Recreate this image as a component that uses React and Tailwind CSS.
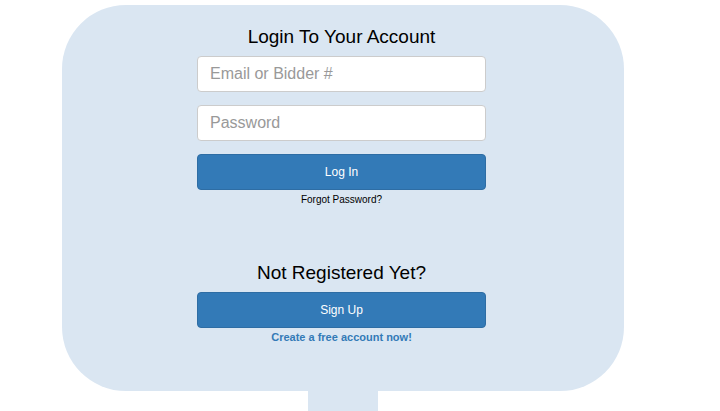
export default function App() {
  return (
    <div className="w-[720px] h-[411px] bg-white overflow-hidden font-['Liberation_Sans',Arial,sans-serif]">
      <div className="pt-[5px] pl-[62px]">
        <div className="w-[562px] h-[386px] rounded-[64px] bg-[#dae6f2] flex flex-col items-start pl-[135px] pt-[20px]">
          <div className="w-[289px] flex flex-col">
            <h2 className="text-center text-[19px] leading-[24px] text-black">Login To Your Account</h2>
            <input
              type="text"
              placeholder="Email or Bidder #"
              className="h-[36px] w-full mt-[7px] rounded-[4px] border border-[#ccc] bg-white px-[12px] text-[16px] placeholder-[#999] outline-none"
            />
            <input
              type="password"
              placeholder="Password"
              className="h-[36px] w-full mt-[13px] rounded-[4px] border border-[#ccc] bg-white px-[12px] text-[16px] placeholder-[#999] outline-none"
            />
            <button className="h-[36px] w-full mt-[13px] rounded-[4px] border border-[#2e6da4] bg-[#337ab7] text-white text-[12px]">
              Log In
            </button>
            <p className="text-center text-[10px] leading-[12px] mt-[4px] text-black">Forgot Password?</p>
            <h2 className="text-center text-[19px] leading-[24px] text-black mt-[55px]">Not Registered Yet?</h2>
            <button className="h-[36px] w-full mt-[7px] rounded-[4px] border border-[#2e6da4] bg-[#337ab7] text-white text-[12px]">
              Sign Up
            </button>
            <a className="text-center text-[11px] leading-[14px] mt-[2px] font-bold text-[#337ab7]">Create a free account now!</a>
          </div>
        </div>
        <div className="ml-[246px] w-[70px] h-[20px] bg-[#dae6f2]" />
      </div>
    </div>
  )
}
